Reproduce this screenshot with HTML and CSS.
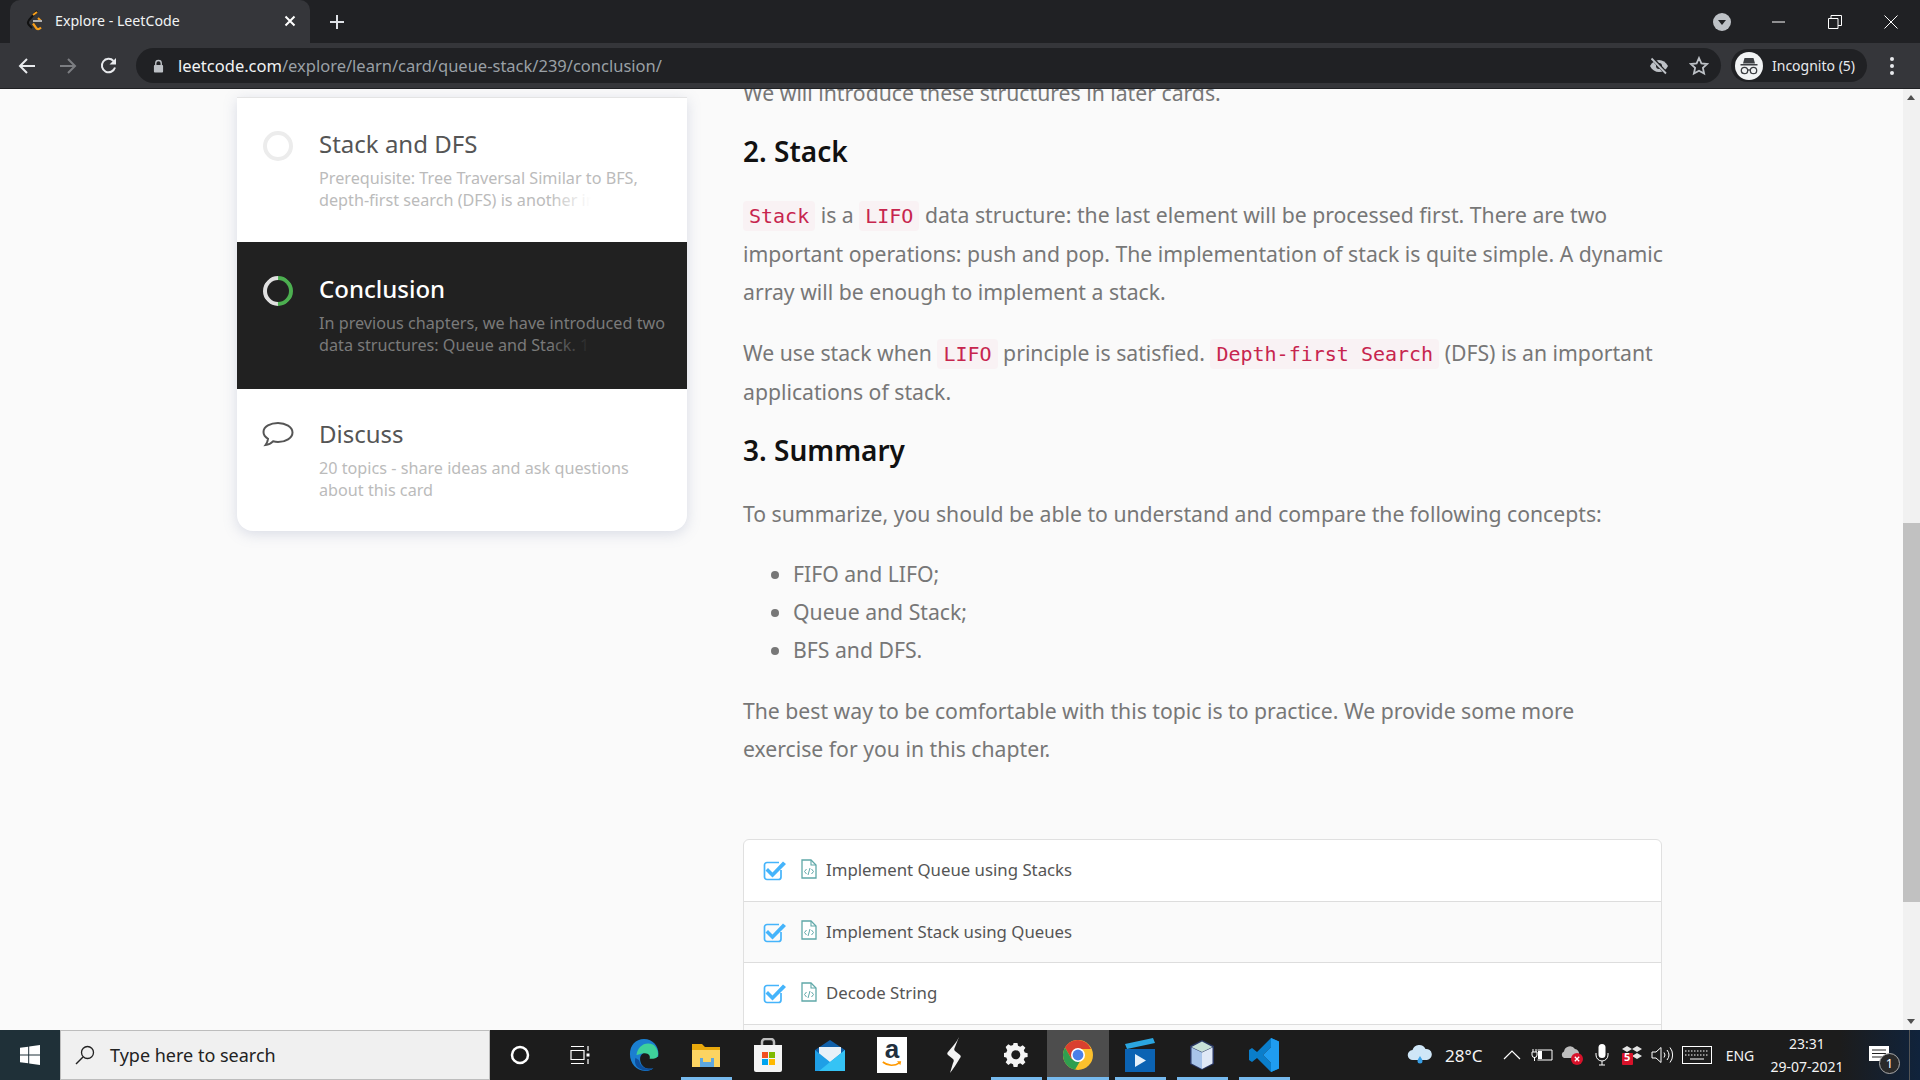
FILE: index.html
```html
<!DOCTYPE html>
<html lang="en">
<head>
    <meta charset="UTF-8">
    <title>Explore - LeetCode</title>
    <link rel="stylesheet" href="styles.css">
</head>
<body>
    <svg class="defs" width="0" height="0">
        <symbol id="icon-check" viewBox="0 0 24 22">
            <path d="M18 11v7a2.500 2.500 0 0 1-2.500 2.500H4A2.500 2.500 0 0 1 1.500 18V6A2.500 2.500 0 0 1 4 3.500h12" fill="none" stroke="#45b4fb" stroke-width="1.700"/>
            <path d="M5 9l4.500 4.500L20 2.500l3 2.500L9.500 18.500 2.500 11.500z" fill="#45b4fb"/>
        </symbol>
        <symbol id="icon-file" viewBox="0 0 16 20">
            <path d="M1 1h9l5 5v13H1z" fill="#fff" stroke="#5fa8a8" stroke-width="1.300"/>
            <path d="M10 1v5h5" fill="none" stroke="#5fa8a8" stroke-width="1.100"/>
            <path d="M5.500 10L3.500 12.500l2 2.500M10.500 10l2 2.500-2 2.500M9 9l-2 7" fill="none" stroke="#5fa8a8" stroke-width="1"/>
        </symbol>
    </svg>

    <!-- tab strip -->
    <div class="tabstrip">
        <div class="tab">
            <svg class="favicon" viewBox="0 0 18 22" width="18" height="22">
                <path d="M11 1L3 10c-1.500 2-1.500 3.500 0 5l3 3" fill="none" stroke="#111" stroke-width="2"/>
                <path d="M7 13.500l3.500 5c1.500 1 3 .5 4.500-1" fill="none" stroke="#f89f1b" stroke-width="2.200"/>
                <path d="M7 5l4-3M12 8l3 3" fill="none" stroke="#f89f1b" stroke-width="2"/>
                <path d="M7 11h9" stroke="#b3b3b3" stroke-width="2"/>
            </svg>
            <span class="tab-title">Explore - LeetCode</span>
            <svg class="tab-close" viewBox="0 0 12 12" width="12" height="12"><path d="M1.500 1.500l9 9M10.500 1.500l-9 9" stroke="#fff" stroke-width="2"/></svg>
        </div>
        <svg class="new-tab" viewBox="0 0 16 16" width="16" height="16"><path d="M8 1v14M1 8h14" stroke="#dee1e6" stroke-width="2"/></svg>
        <svg class="tab-search" viewBox="0 0 18 18" width="18" height="18"><circle cx="9" cy="9" r="9" fill="#bdc1c6"/><path d="M5 7h8l-4 5z" fill="#202124"/></svg>
        <div class="win-btns">
            <svg viewBox="0 0 14 14" width="14" height="14"><path d="M0 7h13" stroke="#fff" stroke-width="1"/></svg>
            <svg viewBox="0 0 14 14" width="14" height="14"><path d="M.5 3.500h9.500v10H.5zM3 3.500V.5h10.500v10H10" fill="none" stroke="#fff" stroke-width="1"/></svg>
            <svg viewBox="0 0 14 14" width="14" height="14"><path d="M.5.5l13 13M13.500.5l-13 13" stroke="#fff" stroke-width="1"/></svg>
        </div>
    </div>

    <!-- toolbar -->
    <div class="toolbar">
        <div class="nav-btns">
            <svg viewBox="0 0 18 18" width="18" height="18"><path d="M17 9H2M9 2L2 9l7 7" fill="none" stroke="#e8eaed" stroke-width="2"/></svg>
            <svg viewBox="0 0 18 18" width="18" height="18"><path d="M1 9h15M9 2l7 7-7 7" fill="none" stroke="#7c7e82" stroke-width="2"/></svg>
            <svg viewBox="0 0 18 18" width="18" height="18"><path d="M15 10.500A6.700 6.700 0 1 1 13.500 4" fill="none" stroke="#e8eaed" stroke-width="2"/><path d="M16 1v6.500H9.500z" fill="#e8eaed"/></svg>
        </div>
        <div class="address">
            <svg class="lock" viewBox="0 0 12 14" width="11" height="14"><path d="M3 6V4a3 3 0 0 1 6 0v2" fill="none" stroke="#bdc1c6" stroke-width="1.500"/><rect x="1" y="6" width="10" height="8" rx="1" fill="#bdc1c6"/></svg>
            <span class="url"><span class="url-host">leetcode.com</span>/explore/learn/card/queue-stack/239/conclusion/</span>
            <svg class="addr-icon" viewBox="0 0 20 18" width="20" height="18"><path d="M1 9c2-4 5.500-6 9-6s7 2 9 6c-2 4-5.500 6-9 6s-7-2-9-6z" fill="#bdc1c6"/><circle cx="10" cy="9" r="3" fill="#202124"/><path d="M3 1l14 15" stroke="#202124" stroke-width="3.500"/><path d="M2.500 1.500l14.500 15" stroke="#bdc1c6" stroke-width="1.800"/></svg>
            <svg class="addr-icon" viewBox="0 0 20 20" width="20" height="20"><path d="M10 2l2.400 5.400 5.800.6-4.300 3.900 1.200 5.700L10 14.700l-5.100 2.900 1.200-5.700L1.800 8l5.800-.6z" fill="none" stroke="#bdc1c6" stroke-width="1.800"/></svg>
        </div>
        <div class="profile">
            <svg class="avatar" viewBox="0 0 28 28" width="28" height="28">
                <circle cx="14" cy="14" r="14" fill="#f1f3f4"/>
                <path d="M9.500 6h9l1.500 5.500H8zM5.500 12h17v1.500h-17z" fill="#3c3f43"/>
                <circle cx="9.500" cy="18.500" r="3.200" fill="none" stroke="#3c3f43" stroke-width="1.300"/>
                <circle cx="18.500" cy="18.500" r="3.200" fill="none" stroke="#3c3f43" stroke-width="1.300"/>
                <path d="M12.500 18h3" stroke="#3c3f43" stroke-width="1.300"/>
            </svg>
            <span class="profile-name">Incognito (5)</span>
        </div>
        <div class="menu-dots"><i></i><i></i><i></i></div>
    </div>

    <!-- page -->
    <div class="page">
        <div class="page-content">
            <div class="sidebar">
                <div class="chapter-list">
                    <div class="chapter">
                        <span class="ring"></span>
                        <div class="chapter-text">
                            <div class="chapter-title">Stack and DFS</div>
                            <div class="chapter-desc fade">Prerequisite: Tree Traversal Similar to BFS, depth-first search (DFS) is another in</div>
                        </div>
                    </div>
                    <div class="chapter chapter-active">
                        <span class="ring ring-half"></span>
                        <div class="chapter-text">
                            <div class="chapter-title">Conclusion</div>
                            <div class="chapter-desc fade">In previous chapters, we have introduced two data structures: Queue and Stack. 1.</div>
                        </div>
                    </div>
                    <div class="chapter chapter-last">
                        <svg class="discuss-icon" viewBox="0 0 32 28" width="32" height="28"><path d="M16 2C8.500 2 1.500 5.500 1.500 11c0 3 2 5.200 4.500 6.800-.2 2-1 4.200-2.500 6.200 3.500-.3 6-2 7.500-3.700 1.500.4 3.200.7 5 .7 7.500 0 14.500-4 14.500-9.500S23.500 2 16 2z" fill="none" stroke="#555" stroke-width="2"/></svg>
                        <div class="chapter-text">
                            <div class="chapter-title">Discuss</div>
                            <div class="chapter-desc">20 topics - share ideas and ask questions about this card</div>
                        </div>
                    </div>
                </div>
            </div>

            <div class="article">
                <p>We will introduce these structures in later cards.</p>
                <h2>2. Stack</h2>
                <p><code>Stack</code> is a <code>LIFO</code> data structure: the last element will be processed first. There are two important operations: push and pop. The implementation of stack is quite simple. A dynamic array will be enough to implement a stack.</p>
                <p>We use stack when <code>LIFO</code> principle is satisfied. <code>Depth-first Search</code> (DFS) is an important applications of stack.</p>
                <h2>3. Summary</h2>
                <p>To summarize, you should be able to understand and compare the following concepts:</p>
                <ul class="concepts">
                    <li>FIFO and LIFO;</li>
                    <li>Queue and Stack;</li>
                    <li>BFS and DFS.</li>
                </ul>
                <p>The best way to be comfortable with this topic is to practice. We provide some more<br>exercise for you in this chapter.</p>
                <div class="problems">
                    <div class="problem">
                        <svg class="check" width="24" height="22"><use href="#icon-check"/></svg>
                        <svg class="file" width="16" height="20"><use href="#icon-file"/></svg>
                        <span>Implement Queue using Stacks</span>
                    </div>
                    <div class="problem">
                        <svg class="check" width="24" height="22"><use href="#icon-check"/></svg>
                        <svg class="file" width="16" height="20"><use href="#icon-file"/></svg>
                        <span>Implement Stack using Queues</span>
                    </div>
                    <div class="problem">
                        <svg class="check" width="24" height="22"><use href="#icon-check"/></svg>
                        <svg class="file" width="16" height="20"><use href="#icon-file"/></svg>
                        <span>Decode String</span>
                    </div>
                    <div class="problem"></div>
                </div>
            </div>
        </div>
        <div class="scrollbar">
            <span class="arrow-up"></span>
            <span class="thumb"></span>
            <span class="arrow-down"></span>
        </div>
    </div>

    <!-- windows taskbar -->
    <div class="taskbar">
        <div class="start">
            <svg viewBox="0 0 20 20" width="20" height="20"><path d="M0 2.800L8.200 1.700v7.800H0zM9.200 1.500L20 0v9.500H9.200zM0 10.500h8.200v7.800L0 17.200zM9.200 10.500H20V20L9.200 18.500z" fill="#fff"/></svg>
        </div>
        <div class="search">
            <svg viewBox="0 0 20 20" width="20" height="20"><circle cx="12.500" cy="7.500" r="6" fill="none" stroke="#222" stroke-width="1.300"/><path d="M8 12L1 19" stroke="#222" stroke-width="1.500"/></svg>
            <span>Type here to search</span>
        </div>
        <div class="task-btn task-plain">
            <svg viewBox="0 0 20 20" width="20" height="20"><circle cx="10" cy="10" r="8" fill="none" stroke="#fff" stroke-width="2.500"/></svg>
        </div>
        <div class="task-btn task-plain">
            <svg viewBox="0 0 20 20" width="20" height="20"><path d="M1 1.500h13M1 18.500h13M1 5.500h13v9H1zM18 1v5M18 14v5" fill="none" stroke="#fff" stroke-width="1.200"/><rect x="16.500" y="8.500" width="3" height="3" fill="#fff"/></svg>
        </div>
        <div class="task-btn app-first">
            <svg viewBox="0 0 32 36" width="30" height="34">
                <path d="M16 1C7 1 1 8 1 17c0 10 7 18 16 18 4 0 7-1 9-3-6 2-13-1-14-8-1-6 3-9 7-9 3 0 5 2 5 5h7c2-9-4-19-15-19z" fill="#1b7fd0"/>
                <path d="M8 18c1-9 9-15 18-11 3 2 5 6 5 10 0 3-2 5-5 5h-4c1-3-1-6-5-6-4 0-8 2-9 2z" fill="#3ed19b"/>
                <path d="M11 24c1 6 7 10 15 8-5 4-14 3-18-2-2-3-2-6-1-9 1 1 3 2 4 3z" fill="#0d4f9e"/>
            </svg>
        </div>
        <div class="task-btn running">
            <svg viewBox="0 0 30 28" width="30" height="28">
                <path d="M1 3h10l3 3h15v20H1z" fill="#e8a80c"/>
                <path d="M1 9h28v17H1z" fill="#fcd462"/>
                <path d="M9 17h14v9H9z" fill="#5ea8e0"/>
                <path d="M12 17h8v4h-8z" fill="#fcd462"/>
            </svg>
        </div>
        <div class="task-btn">
            <svg viewBox="0 0 30 34" width="30" height="34">
                <path d="M9 8V4a3 3 0 0 1 3-3h6a3 3 0 0 1 3 3v4" fill="none" stroke="#bdbdbd" stroke-width="2.500"/>
                <path d="M1 7h28v25a2 2 0 0 1-2 2H3a2 2 0 0 1-2-2z" fill="#f4f4f4"/>
                <rect x="9" y="14" width="6" height="6" fill="#f25022"/><rect x="16" y="14" width="6" height="6" fill="#7fba00"/>
                <rect x="9" y="21" width="6" height="6" fill="#00a4ef"/><rect x="16" y="21" width="6" height="6" fill="#ffb900"/>
            </svg>
        </div>
        <div class="task-btn">
            <svg viewBox="0 0 30 32" width="30" height="32">
                <path d="M0 11L15 1l15 10v21H0z" fill="#0f5fa8"/>
                <path d="M4 8h22v10l-11 7-11-7z" fill="#e8f1f8"/>
                <path d="M0 11l15 12 15-12v21H0z" fill="#1f9fe6"/>
                <path d="M30 11v21H4z" fill="#35c3f5"/>
            </svg>
        </div>
        <div class="task-btn">
            <div class="amazon">
                <span>a</span>
                <svg viewBox="0 0 24 8" width="20" height="7"><path d="M1 1c6 5 14 5 20 1" fill="none" stroke="#f90" stroke-width="2"/><path d="M18 0h5l-1 5z" fill="#f90"/></svg>
            </div>
        </div>
        <div class="task-btn">
            <svg viewBox="0 0 16 36" width="16" height="36"><path d="M13 0C11 5 6 10 2 15c-1 1-1 2 0 3l5 4c1 1 1 2 0 4l-3 10c4-5 7-10 10-15 1-1 1-2 0-3l-5-4c-1-1-1-2 0-4z" fill="#f4f4f4"/></svg>
        </div>
        <div class="task-btn running">
            <svg viewBox="0 0 24 24" width="24" height="24"><path d="M10 1h4l.6 3 2.300 1 2.600-1.700 2.800 2.800-1.700 2.600 1 2.300 3 .6v4l-3 .6-1 2.300 1.700 2.600-2.800 2.800-2.600-1.700-2.300 1-.6 3h-4l-.6-3-2.300-1-2.600 1.700-2.800-2.800 1.700-2.600-1-2.300-3-.6v-4l3-.6 1-2.300L1.700 5.100l2.800-2.800 2.600 1.700 2.300-1z" transform="translate(0 -1) scale(.96)" fill="#f4f4f4"/><circle cx="11.800" cy="11.700" r="4.500" fill="#1c1c1c"/></svg>
        </div>
        <div class="task-btn running task-active">
            <svg viewBox="0 0 30 30" width="30" height="30">
                <circle cx="15" cy="15" r="15" fill="#fbc02d"/>
                <path d="M15 0A15 15 0 0 0 2 7.500L8.500 19 15 9h13A15 15 0 0 0 15 0z" fill="#d9402f"/>
                <path d="M2 7.500A15 15 0 0 0 12 29.700L18 19.500 8.500 19z" fill="#2f9e4f"/>
                <circle cx="15" cy="15" r="7" fill="#fff"/>
                <circle cx="15" cy="15" r="5.400" fill="#4a80e8"/>
            </svg>
        </div>
        <div class="task-btn running">
            <svg viewBox="0 0 30 34" width="30" height="34">
                <path d="M0 6L28 0l2 5L2 11z" fill="#2ba6e0"/>
                <path d="M0 11h30v23H0z" fill="#0b63b3"/>
                <path d="M10 16l11 6.500L10 29z" fill="#e6f1fa"/>
            </svg>
        </div>
        <div class="task-btn running">
            <svg viewBox="0 0 26 32" width="26" height="32">
                <path d="M13 1l12 6v18l-12 6-12-6V7z" fill="#27345f"/>
                <path d="M13 2.500L23.500 8 13 13 2.500 8z" fill="#c7e0d9"/>
                <path d="M2.500 8.500L13 13.500V30L2.500 24.500z" fill="#a8c4ea"/>
                <path d="M23.500 8.500L13 13.500V30l10.500-5.500z" fill="#dfe8f6"/>
            </svg>
        </div>
        <div class="task-btn running">
            <svg viewBox="0 0 30 34" width="30" height="34">
                <path d="M22 0l8 3.500v27L22 34 8 20l-5 4-3-2V12l3-2 5 4zM22 9l-8 8 8 8z" fill="#0a7ecb"/>
                <path d="M22 0l8 3.500v27L22 34zM22 9v16l-8-8z" fill="#1f9cf0" fill-rule="evenodd"/>
            </svg>
        </div>

        <div class="tray">
            <div class="tray-cloud">
                <svg viewBox="0 0 26 20" width="26" height="20"><path d="M6 15a5 5 0 0 1-.5-10A7 7 0 0 1 18.500 4 5.500 5.500 0 0 1 20 15z" fill="#cfe6f7"/><path d="M13 11c2 3 2.500 4 2.500 5a2.500 2.500 0 0 1-5 0c0-1 .5-2 2.500-5z" fill="#3aa0e6"/></svg>
            </div>
            <span class="temp">28°C</span>
            <div class="tray-cell"><svg viewBox="0 0 18 10" width="18" height="10"><path d="M1 9l8-8 8 8" fill="none" stroke="#fff" stroke-width="1.200"/></svg></div>
            <div class="tray-cell"><svg viewBox="0 0 22 14" width="22" height="14"><path d="M6.500 2H21v10H6.500" fill="none" stroke="#fff" stroke-width="1"/><rect x="7" y="3" width="4" height="8" fill="#fff"/><path d="M2 1v3M5 1v3M1 4h5v3a2.500 2.500 0 0 1-5 0zM3.500 9v4" fill="none" stroke="#fff" stroke-width="1"/></svg></div>
            <div class="tray-cell tray-onedrive">
                <svg viewBox="0 0 22 20" width="22" height="20"><path d="M3 13a3.500 3.500 0 0 1 0-6.500A6 6 0 0 1 14 4a4.500 4.500 0 0 1 4 5v4z" fill="#bdbdbd"/><circle cx="16" cy="14" r="6" fill="#d8122a"/><path d="M13.800 11.800l4.400 4.400M18.200 11.800l-4.400 4.400" stroke="#fff" stroke-width="1.300"/></svg>
            </div>
            <div class="tray-cell"><svg viewBox="0 0 14 22" width="14" height="22"><rect x="3.500" y="0" width="7" height="14" rx="3.500" fill="#fff"/><path d="M1 9v2a6 6 0 0 0 12 0V9M7 17v4M4 21h6" fill="none" stroke="#fff" stroke-width="1"/></svg></div>
            <div class="tray-cell tray-dropbox">
                <svg viewBox="0 0 20 20" width="20" height="20"><path d="M5 1l5 3-5 3-5-3zM15 1l5 3-5 3-5-3zM15 8l5 3-5 3-5-3z" fill="#e4e4e4"/><rect x="0" y="8" width="11" height="12" rx="1" fill="#d8122a"/></svg>
                <span class="dropbox-num">5</span>
            </div>
            <div class="tray-cell"><svg viewBox="0 0 22 18" width="22" height="18"><path d="M1 6h4l5-4.500v15L5 12H1zM13 6.500a4 4 0 0 1 0 5M16 4a8 8 0 0 1 0 10M19 1.500a12 12 0 0 1 0 15" fill="none" stroke="#fff" stroke-width="1"/></svg></div>
            <div class="tray-cell tray-kbd">
                <svg viewBox="0 0 30 18" width="30" height="18"><rect x=".5" y=".5" width="29" height="17" fill="none" stroke="#fff"/><path d="M3 5h24M3 9h24" stroke="#fff" stroke-dasharray="1.500 1.500"/><path d="M8 13h14" stroke="#fff"/></svg>
            </div>
            <span class="lang">ENG</span>
            <div class="clock"><span>23:31</span><span>29-07-2021</span></div>
            <div class="notif">
                <svg viewBox="0 0 20 19" width="20" height="19"><path d="M0 0h20v15H0z" fill="#fff"/><path d="M3 4h14M3 7.500h14M3 11h14" stroke="#222" stroke-width="1"/></svg>
                <span class="notif-count">1</span>
            </div>
            <div class="show-desktop"></div>
        </div>
    </div>
</body>
</html>
```

FILE: styles.css
```css
* {
    box-sizing: border-box;
}
body {
    margin: 0;
    height: 1080px;
    overflow: hidden;
    display: flex;
    flex-direction: column;
    font-family: "Noto Sans", "Open Sans", sans-serif;
}
.defs {
    position: absolute;
}

/* tab strip */
.tabstrip {
    height: 43px;
    flex: none;
    display: flex;
    align-items: center;
    background: #202124;
    color: #fff;
}
.tab {
    width: 300px;
    height: 43px;
    margin-left: 10px;
    padding: 0 14px 2px 16px;
    display: flex;
    align-items: center;
    background: #35363a;
    border-radius: 10px 10px 0 0;
}
.favicon {
    margin-right: 11px;
}
.tab-title {
    flex: 1;
    font-size: 14.2px;
    color: #f1f3f4;
}
.new-tab {
    margin-left: 19px;
}
.tab-search {
    margin-left: auto;
    margin-right: 41px;
}
.win-btns {
    display: flex;
    gap: 42px;
    margin-right: 22px;
}

/* toolbar */
.toolbar {
    height: 46px;
    flex: none;
    display: flex;
    align-items: center;
    background: #35363a;
    border-bottom: 1px solid #202124;
}
.nav-btns {
    display: flex;
    gap: 23px;
    margin-left: 18px;
}
.address {
    width: 1585px;
    height: 35px;
    margin-left: 18px;
    padding: 0 12px 0 17px;
    display: flex;
    align-items: center;
    background: #202124;
    border-radius: 18px;
}
.url {
    flex: 1;
    margin-left: 14px;
    font-size: 16.5px;
    color: #9aa0a6;
}
.url-host {
    color: #f1f3f4;
}
.addr-icon {
    margin-left: 20px;
}
.profile {
    width: 136px;
    height: 33px;
    margin-left: 10px;
    padding-left: 4px;
    display: flex;
    align-items: center;
    background: #202124;
    border-radius: 17px;
}
.profile-name {
    margin-left: 9px;
    font-size: 14px;
    color: #e8eaed;
}
.menu-dots {
    margin-left: 23px;
    display: flex;
    flex-direction: column;
    gap: 3px;
}
.menu-dots i {
    width: 4px;
    height: 4px;
    border-radius: 50%;
    background: #e8eaed;
}

/* page */
.page {
    flex: 1;
    display: flex;
    min-height: 0;
    background: #fafafa;
}
.page-content {
    flex: 1;
    min-width: 0;
    display: flex;
    overflow: hidden;
}
.sidebar {
    width: 450px;
    margin-left: 237px;
    flex: none;
}
.chapter-list {
    margin-top: 8px;
    background: #fff;
    border-top: 1px solid #e4e4e4;
    border-radius: 0 0 16px 16px;
    box-shadow: 0 3px 14px rgba(120, 130, 170, 0.25);
}
.chapter {
    height: 144px;
    padding: 29px 0 0 26px;
    display: flex;
    gap: 26px;
}
.chapter-active {
    height: 147px;
    padding-top: 30px;
    background: #212121;
}
.chapter-last {
    height: 142px;
    padding-top: 28px;
}
.ring {
    width: 30px;
    height: 30px;
    margin-top: 4px;
    flex: none;
    border-radius: 50%;
    border: 4px solid #ececec;
}
.ring-half {
    border-color: #4caf50 #4caf50 #e0e0e0 #e0e0e0;
    transform: rotate(45deg);
}
.discuss-icon {
    width: 32px;
    height: 28px;
    margin: 4px -1px 0 -1px;
    flex: none;
}
.chapter-text {
    flex: 1;
    min-width: 0;
    padding-right: 12px;
}
.chapter-title {
    font-size: 24px;
    line-height: 34px;
    color: #555;
}
.chapter-active .chapter-title {
    color: #fff;
    font-weight: 500;
}
.chapter-desc {
    position: relative;
    margin-top: 6px;
    font-size: 16.2px;
    line-height: 22px;
    color: #bbb;
}
.chapter-active .chapter-desc {
    color: #7a7a7a;
}
.fade::after {
    content: "";
    position: absolute;
    right: 66px;
    bottom: 0;
    width: 60px;
    height: 22px;
    background: linear-gradient(90deg, rgba(255, 255, 255, 0), #fff 70%);
}
.chapter-active .fade::after {
    background: linear-gradient(90deg, rgba(33, 33, 33, 0), #212121 70%);
}

/* article */
.article {
    width: 919px;
    margin-left: 56px;
    margin-top: -15px;
    flex: none;
    font-size: 21.2px;
    line-height: 38px;
    color: #777;
}
.article p {
    margin: 0 -10px 23px 0;
}
.article h2 {
    margin: -3px 0 26px;
    font-size: 28px;
    line-height: 38px;
    font-weight: 600;
    color: #111;
}
.article code {
    padding: 3px 6px;
    font-family: "DejaVu Sans Mono", "Liberation Mono", monospace;
    font-size: 20px;
    color: #c7254e;
    background: #f9f2f4;
    border-radius: 4px;
}
.concepts {
    margin: -1px 0 23px;
    padding-left: 50px;
}
.problems {
    margin-top: 71px;
    background: #fff;
    border: 1px solid #e0e0e0;
    border-radius: 6px 6px 0 0;
}
.problem {
    height: 61.5px;
    padding-left: 19px;
    display: flex;
    align-items: center;
    font-size: 16.8px;
    color: #555;
    border-bottom: 1px solid #ddd;
}
.problem:nth-child(even) {
    background: #fafafa;
}
.check {
    margin-right: 14px;
}
.file {
    margin-right: 9px;
    margin-top: -3px;
}

/* scrollbar */
.scrollbar {
    width: 17px;
    flex: none;
    position: relative;
    background: #f1f1f1;
}
.thumb {
    position: absolute;
    left: 0;
    top: 434px;
    width: 17px;
    height: 379px;
    background: #c1c1c1;
}
.arrow-up, .arrow-down {
    position: absolute;
    left: 4px;
    width: 0;
    height: 0;
    border-left: 4.5px solid transparent;
    border-right: 4.5px solid transparent;
}
.arrow-up {
    top: 6px;
    border-bottom: 5px solid #505050;
}
.arrow-down {
    bottom: 6px;
    border-top: 5px solid #505050;
}

/* taskbar */
.taskbar {
    height: 50px;
    flex: none;
    display: flex;
    align-items: stretch;
    background: linear-gradient(90deg, #1f3038 0, #1f3038 60px, #1c1c1c 490px, #1c1c1c 1840px, #10233c 1920px);
    color: #fff;
}
.start {
    width: 60px;
    display: flex;
    align-items: center;
    justify-content: center;
}
.search {
    width: 430px;
    padding-left: 14px;
    display: flex;
    align-items: center;
    gap: 15px;
    background: #f0f0f0;
    border: 1px solid #bdbdbd;
    font-size: 18px;
    color: #222;
}
.task-btn {
    width: 62px;
    position: relative;
    display: flex;
    align-items: center;
    justify-content: center;
}
.task-plain {
    width: 60px;
}
.app-first {
    margin-left: 3px;
}
.running::after {
    content: "";
    position: absolute;
    left: 6px;
    right: 5px;
    bottom: 0;
    height: 3px;
    background: #76b9ed;
}
.task-active {
    background: #4d4d4d;
}
.task-active::after {
    left: 0;
    right: 0;
}
.amazon {
    width: 30px;
    height: 36px;
    display: flex;
    flex-direction: column;
    align-items: center;
    background: #fff;
    font-family: "Liberation Sans", sans-serif;
    font-size: 26px;
    font-weight: 700;
    line-height: 25px;
    color: #222f3e;
}
.amazon svg {
    margin-top: -1px;
}
.tray {
    margin-left: auto;
    display: flex;
    align-items: center;
}
.tray-cloud {
    width: 34px;
    display: flex;
    justify-content: center;
}
.temp {
    width: 60px;
    padding-left: 8px;
    font-size: 17px;
    color: #f4f4f4;
}
.tray-cell {
    width: 30px;
    position: relative;
    display: flex;
    justify-content: center;
}
.tray-kbd {
    width: 40px;
}
.dropbox-num {
    position: absolute;
    left: 7px;
    top: 4px;
    font-size: 11px;
    line-height: 16px;
    font-weight: 700;
    color: #fff;
}
.lang {
    width: 46px;
    font-size: 14px;
    text-align: center;
    color: #f4f4f4;
}
.clock {
    width: 88px;
    display: flex;
    flex-direction: column;
    align-items: center;
    gap: 5px;
    font-size: 14px;
    line-height: 18px;
    color: #f4f4f4;
}
.notif {
    width: 58px;
    height: 100%;
    position: relative;
    display: flex;
    align-items: center;
    padding-left: 18px;
}
.notif-count {
    position: absolute;
    left: 28px;
    top: 23px;
    width: 21px;
    height: 21px;
    border-radius: 50%;
    border: 1px solid #aaa;
    background: #2a2a2a;
    font-size: 13px;
    line-height: 19px;
    text-align: center;
}
.show-desktop {
    width: 11px;
    height: 100%;
    border-left: 1px solid #555;
}
```
